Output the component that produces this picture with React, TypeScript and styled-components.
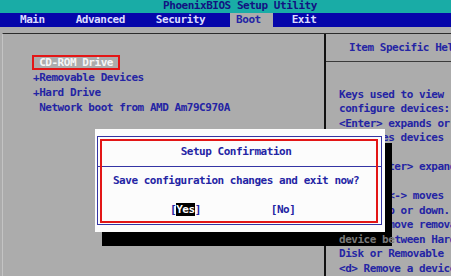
import React from 'react';
import styled, { createGlobalStyle } from 'styled-components';

const GlobalStyle = createGlobalStyle`
  html, body {
    margin: 0;
    padding: 0;
  }
  body {
    background: #acacac;
    overflow: hidden;
  }
`;

const NAVY = '#2424a4';

const menu = ['Main', 'Advanced', 'Security', 'Boot', 'Exit'];

const bootItems = [
  { prefix: ' ', label: 'CD-ROM Drive', selected: true },
  { prefix: '+', label: 'Removable Devices' },
  { prefix: '+', label: 'Hard Drive' },
  { prefix: ' ', label: 'Network boot from AMD Am79C970A' },
];

const helpLines = [
  'Keys used to view',
  'configure devices:',
  '<Enter> expands or',
  'collapses devices',
  'a + or -',
  '<Ctrl+Enter> expands',
  'all',
  '<+> and <-> moves',
  'device up or down.',
  '<n> May move removable',
];

export default function App() {
  return (
    <>
      <GlobalStyle />
      <Viewport>
        <Screen>
          <TitleBar>PhoenixBIOS Setup Utility</TitleBar>
          <MenuBar>
            {menu.map((m) => (
              <MenuItem key={m} $active={m === 'Boot'}>
                {m}
              </MenuItem>
            ))}
          </MenuBar>
          <Frame>
            <LeftPanel>
              {bootItems.map((item) => (
                <BootRow key={item.label}>
                  {item.selected ? (
                    <Selected>{item.prefix + item.label}</Selected>
                  ) : (
                    item.prefix + item.label
                  )}
                </BootRow>
              ))}
            </LeftPanel>
            <RightPanel>
              <HelpHeader>Item Specific Help</HelpHeader>
              <HelpText>
                {helpLines.map((line, i) => (
                  <HelpLine key={i}>{line}</HelpLine>
                ))}
                <HelpLine>
                  <Shadowed>device be</Shadowed>tween Hard
                </HelpLine>
                <HelpLine>Disk or Removable</HelpLine>
                <HelpLine>{'<d> Remove a device'}</HelpLine>
              </HelpText>
            </RightPanel>
          </Frame>

          <Dialog>
            <DialogFrame>
              <DialogTitle>Setup Confirmation</DialogTitle>
              <DialogBody>
                <Message>Save configuration changes and exit now?</Message>
                <Buttons>
                  <span>
                    [<Highlight>Yes</Highlight>]
                  </span>
                  <span>[No]</span>
                </Buttons>
              </DialogBody>
            </DialogFrame>
          </Dialog>
        </Screen>
      </Viewport>
    </>
  );
}

const Viewport = styled.div`
  width: 451px;
  height: 276px;
  overflow: hidden;
`;

const Screen = styled.div`
  position: relative;
  width: 480px;
  height: 276px;
  display: flex;
  flex-direction: column;
  background: #acacac;
  font-family: 'DejaVu Sans Mono', 'Liberation Mono', monospace;
  font-weight: bold;
  font-size: 11px;
  letter-spacing: -0.47px;
  color: ${NAVY};
  white-space: pre;
`;

const TitleBar = styled.div`
  height: 13px;
  line-height: 12px;
  background: #19aca6;
  color: #121282;
  text-align: center;
`;

const MenuBar = styled.div`
  height: 14px;
  line-height: 14px;
  display: flex;
  gap: 13px;
  padding-left: 14px;
  background: #0606aa;
`;

const MenuItem = styled.div<{ $active?: boolean }>`
  padding: 0 12px 0 6px;
  color: ${(p) => (p.$active ? NAVY : '#dcdcff')};
  background: ${(p) => (p.$active ? '#acacac' : 'transparent')};
`;

const Frame = styled.div`
  flex: 1;
  margin-top: 6px;
  margin-left: 2px;
  display: grid;
  grid-template-columns: 323px 1fr;
  border-top: 1px solid #2c2c2c;
  border-left: 1px solid #c4c4c4;
`;

const LeftPanel = styled.div`
  padding: 21px 0 0 30px;
  border-right: 2px solid #111;
`;

const BootRow = styled.div`
  line-height: 15px;
  height: 15px;
`;

const Selected = styled.span`
  position: relative;
  display: inline-block;
  color: #f6f6f6;

  &::after {
    content: '';
    position: absolute;
    left: -1px;
    right: -7px;
    top: 0;
    bottom: 0;
    border: 2px solid #e31616;
  }
`;

const RightPanel = styled.div`
  display: flex;
  flex-direction: column;
`;

const HelpHeader = styled.div`
  line-height: 14px;
  padding: 7px 0 6px 23px;
  border-bottom: 1px solid #3a3a3a;
`;

const HelpText = styled.div`
  padding: 26px 0 0 13px;
`;

const HelpLine = styled.div`
  line-height: 14.5px;
  height: 14.5px;
`;

const Shadowed = styled.span`
  position: relative;
  z-index: 3;
  color: #7a7a7a;
`;

const Dialog = styled.div`
  position: absolute;
  left: 95px;
  top: 129px;
  width: 290px;
  height: 103px;
  box-sizing: border-box;
  padding: 7px 3px 7px 2px;
  background: #fcfcfc;
  box-shadow: 7px 14px 0 #000;
  z-index: 2;
`;

const DialogFrame = styled.div`
  position: relative;
  height: 100%;
  box-sizing: border-box;
  border: 1px solid #3434a4;
  display: flex;
  flex-direction: column;

  &::after {
    content: '';
    position: absolute;
    left: 2px;
    right: 3px;
    top: 2px;
    bottom: 1px;
    border: 2px solid #e31616;
    pointer-events: none;
  }
`;

const DialogTitle = styled.div`
  height: 29px;
  line-height: 29px;
  text-align: center;
  padding-right: 7px;
  border-bottom: 1px solid #3434a4;
`;

const DialogBody = styled.div`
  padding-top: 7px;
  line-height: 14.5px;
`;

const Message = styled.div`
  text-align: center;
  padding-right: 7px;
`;

const Buttons = styled.div`
  display: flex;
  gap: 70px;
  padding-left: 72px;
  margin-top: 14.5px;
`;

const Highlight = styled.span`
  background: #000;
  color: #fff;
`;
